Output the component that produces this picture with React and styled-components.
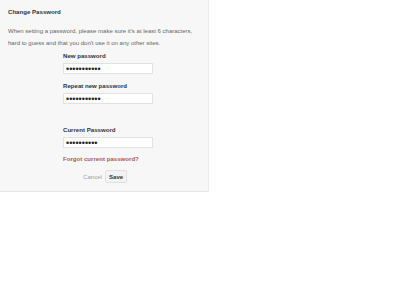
import React from "react";
import styled, { createGlobalStyle } from "styled-components";

const GlobalStyle = createGlobalStyle`
  html, body {
    margin: 0;
    padding: 0;
    background: #fff;
    font-family: "Liberation Sans", Arial, sans-serif;
  }
`;

const fields = [
  { id: "new", label: "New password", dots: 11 },
  { id: "repeat", label: "Repeat new password", dots: 11 },
  { id: "current", label: "Current Password", dots: 10, spaced: true },
];

const App = () => {
  return (
    <>
      <GlobalStyle />
      <Panel>
        <Title>Change Password</Title>
        <Intro>
          When setting a password, please make sure it's at least 6 characters,
          hard to guess and that you don't use it on any other sites.
        </Intro>
        <Form onSubmit={(e) => e.preventDefault()}>
          {fields.map((f) => (
            <Field key={f.id} spaced={f.spaced}>
              <Label htmlFor={f.id}>{f.label}</Label>
              <Input id={f.id} type="password" defaultValue={"x".repeat(f.dots)} />
            </Field>
          ))}
          <Forgot href="#">Forgot current password?</Forgot>
          <Actions>
            <Cancel href="#">Cancel</Cancel>
            <Save type="submit">Save</Save>
          </Actions>
        </Form>
      </Panel>
    </>
  );
};

export default App;

/* -------------------- Styled Components -------------------- */
const Panel = styled.section`
  width: 209px;
  height: 192px;
  box-sizing: border-box;
  padding: 8px 0 0 8px;
  background: #f7f7f7;
  border-right: 1px solid #ececec;
  border-bottom: 1px solid #e6e6e6;
`;

const Title = styled.h3`
  margin: 0;
  font-size: 6.1px;
  line-height: 8px;
  font-weight: bold;
  color: #333;
`;

const Intro = styled.p`
  margin: 9px 0 0 0;
  width: 192px;
  font-size: 6px;
  line-height: 12px;
  color: #666;
`;

const Form = styled.form`
  margin: 3px 0 0 55px;
  width: 90px;
  display: flex;
  flex-direction: column;
`;

const Field = styled.div`
  display: flex;
  flex-direction: column;
  gap: 3px;
  margin-top: ${(p) => (p.spaced ? "14px" : "0")};
  margin-bottom: 8px;
`;

const Label = styled.label`
  font-size: 6.1px;
  line-height: 8px;
  font-weight: bold;
  color: #333;
`;

const Input = styled.input`
  width: 90px;
  height: 11px;
  box-sizing: border-box;
  margin: 0;
  padding: 0 2px;
  border: 1px solid #e2e2e2;
  background: #fff;
  font-family: "Liberation Sans", Arial, sans-serif;
  font-size: 9px;
  color: #222;
  outline: none;
`;

const Forgot = styled.a`
  margin-top: -1px;
  font-size: 6.1px;
  line-height: 8px;
  font-weight: bold;
  color: #b0574b;
  text-decoration: none;
`;

const Actions = styled.div`
  display: flex;
  align-items: center;
  gap: 3px;
  margin: 7px 0 0 20px;
`;

const Cancel = styled.a`
  font-size: 6.1px;
  color: #a0a0a0;
  text-decoration: none;
`;

const Save = styled.button`
  height: 13px;
  padding: 0 3px;
  border: 1px solid #e0e0e0;
  border-radius: 2px;
  background: #f3f3f3;
  font-family: "Liberation Sans", Arial, sans-serif;
  font-size: 6.1px;
  font-weight: bold;
  color: #333;
  cursor: pointer;
`;
